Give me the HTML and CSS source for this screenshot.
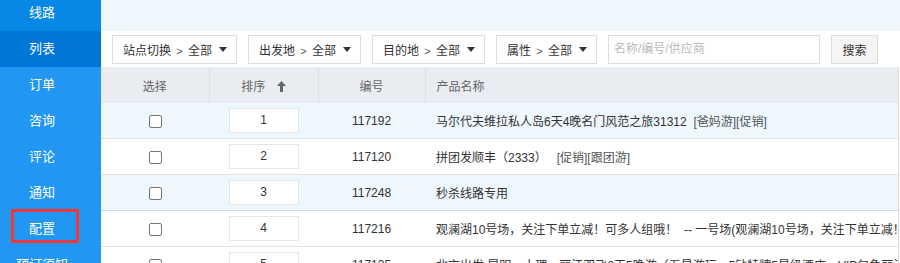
FILE: index.html
```html
<!DOCTYPE html>
<html lang="zh-CN">
<head>
<meta charset="UTF-8" />
<meta name="viewport" content="width=device-width, initial-scale=1" />
<title>线路列表</title>
<link rel="stylesheet" href="styles.css">
</head>
<body>
  <div class="page">
    <aside class="sidebar">
      <ul class="menu">
        <li class="menu-head">线路</li>
        <li class="active">列表</li>
        <li>订单</li>
        <li>咨询</li>
        <li>评论</li>
        <li>通知</li>
        <li class="marked">配置</li>
        <li>预订须知</li>
      </ul>
    </aside>

    <main class="main">
      <div class="topbar"></div>

      <div class="toolbar">
        <div class="select w-site"><span>站点切换 <span class="gt">&gt;</span> 全部</span><span class="caret"></span></div>
        <div class="select w-mid"><span>出发地 <span class="gt">&gt;</span> 全部</span><span class="caret"></span></div>
        <div class="select w-mid"><span>目的地 <span class="gt">&gt;</span> 全部</span><span class="caret"></span></div>
        <div class="select w-attr"><span>属性 <span class="gt">&gt;</span> 全部</span><span class="caret"></span></div>
        <input class="search" type="text" placeholder="名称/编号/供应商" />
        <button class="search-btn">搜索</button>
      </div>

      <table class="list">
        <colgroup>
          <col class="c-check" />
          <col class="c-sort" />
          <col class="c-id" />
          <col />
        </colgroup>
        <thead>
          <tr>
            <th>选择</th>
            <th>排序
              <svg class="arrow" width="9" height="11" viewBox="0 0 9 11"><path d="M4.5 0 L9 5 L6 5 L6 11 L3 11 L3 5 L0 5 Z" fill="#666"/></svg>
            </th>
            <th>编号</th>
            <th class="name">产品名称</th>
          </tr>
        </thead>
        <tbody>
          <tr class="odd">
            <td><span class="check"></span></td>
            <td><span class="order">1</span></td>
            <td>117192</td>
            <td class="name">马尔代夫维拉私人岛6天4晚名门风范之旅31312 &nbsp;<span class="tag">[爸妈游][促销]</span></td>
          </tr>
          <tr>
            <td><span class="check"></span></td>
            <td><span class="order">2</span></td>
            <td>117120</td>
            <td class="name">拼团发顺丰（2333） &nbsp;&nbsp;<span class="tag">[促销][跟团游]</span></td>
          </tr>
          <tr class="odd sep">
            <td><span class="check"></span></td>
            <td><span class="order">3</span></td>
            <td>117248</td>
            <td class="name">秒杀线路专用</td>
          </tr>
          <tr>
            <td><span class="check"></span></td>
            <td><span class="order">4</span></td>
            <td>117216</td>
            <td class="name">观澜湖10号场，关注下单立减！可多人组哦！ &nbsp;-- 一号场(观澜湖10号场，关注下单立减！可多人组哦！)</td>
          </tr>
          <tr>
            <td><span class="check"></span></td>
            <td><span class="order">5</span></td>
            <td>117135</td>
            <td class="name">北京出发 昆明、大理、丽江双飞6天5晚游（五星游玩，5钻特牌5星级酒店，VIP包免丽江古城）</td>
          </tr>
        </tbody>
      </table>
    </main>
  </div>
</body>
</html>
```

FILE: styles.css
```css
body {
  margin: 0;
  font-family: "Liberation Sans", "Noto Sans CJK SC", sans-serif;
  font-size: 12px;
  color: #333;
  background: #fff;
}
.page {
  display: flex;
  height: 263px;
  overflow: hidden;
}
.sidebar {
  width: 101px;
  flex-shrink: 0;
  background: #2196f3;
}
.menu {
  list-style: none;
  margin: -5px 0 0 0;
  padding: 0;
}
.menu li {
  position: relative;
  height: 36px;
  line-height: 36px;
  padding-right: 17px;
  text-align: center;
  color: #fff;
  font-size: 13px;
}
.menu li.menu-head {
  background: #0787e6;
}
.menu li.active {
  background: #0077d8;
}
.menu li.marked::after {
  content: "";
  position: absolute;
  left: 11px;
  top: -2px;
  width: 62px;
  height: 28px;
  border: 3px solid #f33838;
}
.main {
  flex: 1;
  min-width: 0;
  overflow: hidden;
}
.topbar {
  height: 31px;
  background: #eef6fe;
}
.toolbar {
  display: flex;
  align-items: center;
  gap: 11px;
  height: 36px;
  padding-left: 11px;
  background: #fff;
}
.select {
  display: flex;
  align-items: center;
  justify-content: space-between;
  box-sizing: border-box;
  height: 29px;
  padding: 0 9px 0 10px;
  border: 1px solid #ddd;
  font-size: 12px;
  color: #333;
  white-space: nowrap;
}
.w-site { width: 125px; }
.w-mid { width: 113px; }
.w-attr { width: 101px; }
.select .gt {
  margin: 0 2px;
  font-size: 11px;
  color: #555;
}
.caret {
  width: 0;
  height: 0;
  border-left: 4px solid transparent;
  border-right: 4px solid transparent;
  border-top: 5px solid #333;
}
.search {
  box-sizing: border-box;
  width: 212px;
  height: 29px;
  padding: 0 5px;
  border: 1px solid #ddd;
  font-family: inherit;
  font-size: 12px;
  outline: none;
}
.search::placeholder {
  color: #bbb;
}
.search-btn {
  box-sizing: border-box;
  width: 47px;
  height: 29px;
  padding: 0;
  border: 1px solid #ddd;
  background: #f5f5f5;
  font-family: inherit;
  font-size: 12px;
  color: #333;
}
.list {
  width: 798px;
  table-layout: fixed;
  border-collapse: collapse;
  border-right: 1px solid #ddd;
}
.c-check { width: 108px; }
.c-sort { width: 109px; }
.c-id { width: 107px; }
.list th {
  height: 36px;
  padding: 0;
  background: #e9ecf0;
  color: #666;
  font-weight: normal;
  border-left: 1px solid #dcdfe4;
}
.list th:first-child {
  border-left: none;
}
.list th .arrow {
  margin-left: 8px;
  vertical-align: -1px;
}
.list td {
  height: 35px;
  padding: 0;
  text-align: center;
  border-bottom: 1px solid #e3e3e3;
  white-space: nowrap;
  overflow: hidden;
}
.list .name {
  text-align: left;
  padding-left: 11px;
}
.list tr.odd td {
  background: #eef6fe;
}
.list tr.sep td {
  border-bottom-color: #c9dcef;
}
.tag {
  color: #555;
}
.check {
  display: inline-block;
  box-sizing: border-box;
  width: 13px;
  height: 13px;
  border: 1px solid #777;
  border-radius: 2px;
  background: #fff;
  vertical-align: middle;
}
.order {
  display: inline-block;
  box-sizing: border-box;
  width: 70px;
  height: 25px;
  line-height: 23px;
  border: 1px solid #e6e6e6;
  background: #fff;
  vertical-align: middle;
}
```
